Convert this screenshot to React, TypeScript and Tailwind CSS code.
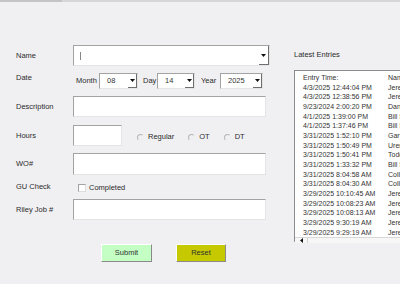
const entries: [string, string][] = [
  ["Entry Time:", "Name"],
  ["4/3/2025 12:44:04 PM", "Jeremy"],
  ["4/3/2025 12:38:56 PM", "Jeremy"],
  ["9/23/2024 2:00:20 PM", "Daniel"],
  ["4/1/2025 1:39:00 PM", "Bill S"],
  ["4/1/2025 1:37:46 PM", "Bill S"],
  ["3/31/2025 1:52:10 PM", "Gary"],
  ["3/31/2025 1:50:49 PM", "Urena"],
  ["3/31/2025 1:50:41 PM", "Todd"],
  ["3/31/2025 1:33:32 PM", "Bill S"],
  ["3/31/2025 8:04:58 AM", "Collin"],
  ["3/31/2025 8:04:30 AM", "Collin"],
  ["3/29/2025 10:10:45 AM", "Jeremy"],
  ["3/29/2025 10:08:23 AM", "Jeremy"],
  ["3/29/2025 10:08:13 AM", "Jeremy"],
  ["3/29/2025 9:30:19 AM", "Jeremy"],
  ["3/29/2025 9:29:19 AM", "Jeremy"],
];

const field = "bg-white border border-[#a3a3a3] border-b-[#e4e4e4] border-r-[#e4e4e4]";

function Arrow() {
  return (
    <svg width="5" height="3" viewBox="0 0 5 3">
      <path d="M0 0h5L2.5 3z" fill="#111" />
    </svg>
  );
}

function Select({ value, width }: { value: string; width: string }) {
  return (
    <div className={`${width} h-[16px] ${field} flex items-center relative`}>
      <span className="pl-[7px] text-[7.5px] text-[#333]">{value}</span>
      <div className="absolute right-0 top-0 bottom-0 w-[9px] flex items-center justify-center border-r border-b border-[#6e6e6e]">
        <Arrow />
      </div>
    </div>
  );
}

function Radio({ label, gap }: { label: string; gap: string }) {
  return (
    <div className={`flex items-center ${gap}`}>
      <div className="w-[7px] h-[7px] rounded-full border border-[#b5b5b5] border-b-[#f0f0f0] border-r-[#f0f0f0]" />
      <span className="ml-[4px]">{label}</span>
    </div>
  );
}

function Label({ text }: { text: string }) {
  return <div className="w-[57px] shrink-0">{text}</div>;
}

export default function App() {
  return (
    <div
      className="w-[400px] h-[284px] overflow-hidden bg-[#f0eff2] text-[7.5px] text-[#2c2c2c] relative"
      style={{ fontFamily: '"Liberation Sans", Arial, sans-serif' }}
    >
      <div className="h-[3px] border-t-2 border-[#d6d5d8] flex">
        <div className="w-[62px] h-[2px] -mt-[2px] bg-[#c4c3c6]" />
      </div>
      <div className="flex">
        {/* form column */}
        <div className="w-[294px] shrink-0 pl-[16px] pt-[42px] flex flex-col">
          <div className="flex items-center h-[21px]">
            <Label text="Name" />
            <div className={`w-[197px] h-[21px] ${field} relative flex items-center`}>
              <div className="ml-[6px] w-px h-[8px] bg-[#888]" />
              <div className="absolute right-0 top-0 bottom-0 w-[10px] flex items-center justify-center border-r border-b border-[#6e6e6e]">
                <Arrow />
              </div>
            </div>
          </div>

          <div className="flex items-start h-[16px] mt-[7px]">
            <div className="w-[57px] shrink-0 -mt-[1px]">Date</div>
            <div className="flex items-center h-[16px]">
              <span className="w-[26px] pl-[3px]">Month</span>
              <Select value="08" width="w-[39px]" />
              <span className="w-[19px] pl-[5px]">Day</span>
              <Select value="14" width="w-[38px]" />
              <span className="w-[25px] pl-[6px]">Year</span>
              <Select value="2025" width="w-[43px]" />
            </div>
          </div>

          <div className="flex items-center h-[21px] mt-[7px]">
            <Label text="Description" />
            <div className={`w-[193px] h-[21px] ${field}`} />
          </div>

          <div className="flex items-center h-[21px] mt-[8px]">
            <Label text="Hours" />
            <div className={`w-[49px] h-[21px] ${field}`} />
            <Radio label="Regular" gap="ml-[15px] mt-[3px]" />
            <Radio label="OT" gap="ml-[14px] mt-[3px]" />
            <Radio label="DT" gap="ml-[14px] mt-[3px]" />
          </div>

          <div className="flex items-center h-[22px] mt-[7px]">
            <Label text="WO#" />
            <div className={`w-[193px] h-[22px] ${field}`} />
          </div>

          <div className="flex items-center h-[13px] mt-[5px]">
            <Label text="GU Check" />
            <div className="flex items-center ml-[5px] mt-[2px]">
              <div className="w-[8px] h-[8px] bg-white border border-[#a3a3a3] border-b-[#dcdcdc] border-r-[#dcdcdc]" />
              <span className="ml-[3px]">Completed</span>
            </div>
          </div>

          <div className="flex items-center h-[21px] mt-[6px]">
            <Label text="Riley Job #" />
            <div className={`w-[193px] h-[21px] ${field}`} />
          </div>

          <div className="flex h-[18px] mt-[24px] pl-[85px] gap-[24px]">
            <button className="w-[51px] h-[18px] bg-[#c4ffc4] border border-white border-b-[#8a8a8a] border-r-[#8a8a8a] text-[7.5px] text-[#333]">
              Submit
            </button>
            <button className="w-[50px] h-[18px] bg-[#c6c800] border border-white border-b-[#8a8a8a] border-r-[#8a8a8a] text-[7.5px] text-[#333]">
              Reset
            </button>
          </div>
        </div>

        {/* latest entries */}
        <div className="flex-1 pt-[47px] flex flex-col min-w-0">
          <div className="h-[10px] leading-[10px]">Latest Entries</div>
          <div className="mt-[10px] h-[172px] w-[130px] bg-white border border-[#8c8c8c] border-b-[#b0b0b0] flex flex-col">
            <div className="flex-1 pl-[8px] pt-[2px] text-[7px] text-[#333]">
              {entries.map(([t, n], i) => (
                <div key={i} className="flex h-[9.67px] leading-[9.67px] whitespace-nowrap">
                  <span className="w-[85px] shrink-0">{t}</span>
                  <span>{n}</span>
                </div>
              ))}
            </div>
            <div className="h-[12px] border-t border-[#d8d8d8] bg-[#f7f7f7] flex items-center">
              <div className="w-[13px] h-full flex items-center justify-center border-r border-[#d0d0d0]">
                <svg width="3" height="5" viewBox="0 0 3 5">
                  <path d="M3 0v5L0 2.5z" fill="#111" />
                </svg>
              </div>
            </div>
          </div>
        </div>
      </div>
    </div>
  );
}
